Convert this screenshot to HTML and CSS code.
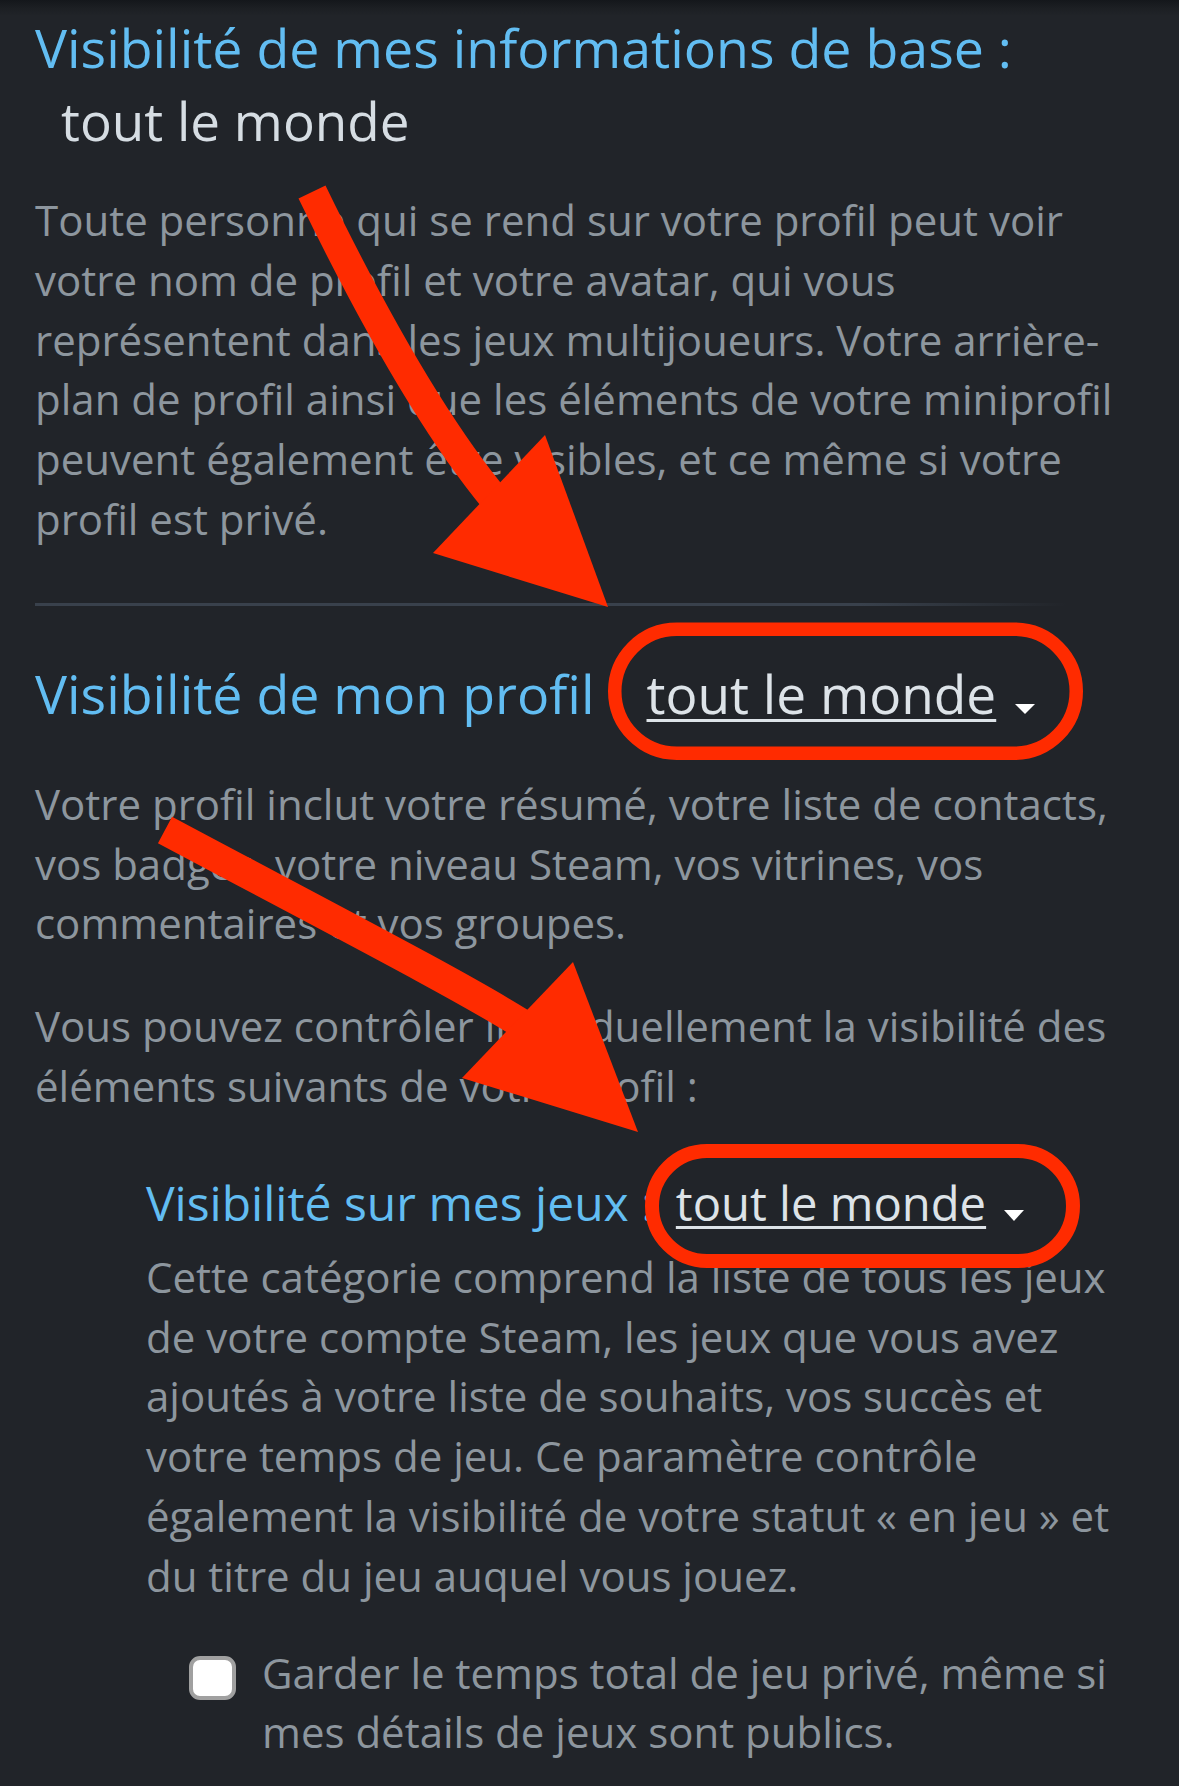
FILE: index.html
```html
<!DOCTYPE html>
<html lang="fr">
<head>
<meta charset="utf-8">
<title>Paramètres de confidentialité</title>
<link rel="stylesheet" href="styles.css">
</head>
<body>
<div class="page">
  <section class="block">
    <h2 class="heading">Visibilité de mes informations de base :</h2>
    <div class="value">tout le monde</div>
    <p class="desc first">Toute personne qui se rend sur votre profil peut voir<br>votre nom de profil et votre avatar, qui vous<br>représentent dans les jeux multijoueurs. Votre arrière-<br>plan de profil ainsi que les éléments de votre miniprofil<br>peuvent également être visibles, et ce même si votre<br>profil est privé.</p>
  </section>

  <hr class="divider">

  <section class="block">
    <div class="setting-row main-row">
      <h2 class="heading">Visibilité de mon profil</h2>
      <a class="dropdown" href="#">tout le monde</a><span class="caret"></span>
    </div>
    <p class="desc after-row">Votre profil inclut votre résumé, votre liste de contacts,<br>vos badges, votre niveau Steam, vos vitrines, vos<br>commentaires et vos groupes.</p>
    <p class="desc spaced">Vous pouvez contrôler individuellement la visibilité des<br>éléments suivants de votre profil :</p>

    <div class="sub">
      <div class="setting-row sub-row">
        <h3 class="subheading">Visibilité sur mes jeux :</h3>
        <a class="dropdown small" href="#">tout le monde</a><span class="caret small"></span>
      </div>
      <p class="desc sub-desc">Cette catégorie comprend la liste de tous les jeux<br>de votre compte Steam, les jeux que vous avez<br>ajoutés à votre liste de souhaits, vos succès et<br>votre temps de jeu. Ce paramètre contrôle<br>également la visibilité de votre statut « en jeu » et<br>du titre du jeu auquel vous jouez.</p>
      <label class="check-row">
        <span class="checkbox"></span>
        <span class="check-label">Garder le temps total de jeu privé, même si<br>mes détails de jeux sont publics.</span>
      </label>
    </div>
  </section>

  <svg class="annotations" viewBox="0 0 1179 1786" aria-hidden="true">
    <path d="M312 192 C 345 260 420 410 497 502" fill="none" stroke="#ff2b00" stroke-width="30"/>
    <polygon points="433,553 545,435 608,607" fill="#ff2b00"/>
    <rect x="614.75" y="629.25" width="461.5" height="124" rx="62" ry="62" fill="none" stroke="#ff2b00" stroke-width="13.5"/>
    <path d="M165 830 C 330 918 460 985 522 1024" fill="none" stroke="#ff2b00" stroke-width="30"/>
    <polygon points="462,1078 573,962 638,1132" fill="#ff2b00"/>
    <rect x="652" y="1151" width="421" height="110" rx="55" ry="55" fill="none" stroke="#ff2b00" stroke-width="14"/>
  </svg>
</div>
</body>
</html>
```

FILE: styles.css
```css
html, body {
  margin: 0;
  padding: 0;
}

body {
  background: #212429 linear-gradient(#14171b 0, #1c1f23 8px, #212429 16px) no-repeat;
  font-family: "Open Sans", "Noto Sans", "DejaVu Sans", sans-serif;
  min-height: 1786px;
}

.page {
  position: relative;
  padding: 12px 10px 0 35px;
  min-height: 1774px;
}

.block {
  margin: 0;
}

.heading {
  margin: 0;
  font-size: 53.7px;
  line-height: 72px;
  font-weight: 400;
  color: #62bdf2;
  white-space: nowrap;
}

.value {
  margin-top: 1px;
  padding-left: 26px;
  font-size: 53px;
  line-height: 72px;
  color: #d6dde3;
}

.desc {
  margin: 0;
  font-size: 42px;
  line-height: 59.8px;
  color: #8d969e;
  white-space: nowrap;
}

.desc.first {
  margin-top: 33px;
}

.divider {
  margin: 54px 0 0 0;
  width: 1032px;
  height: 3px;
  border: 0;
  background: linear-gradient(to right, #39414c 0, #39414c 80%, rgba(57, 65, 76, 0) 100%);
}

.setting-row {
  display: flex;
  align-items: baseline;
}

.main-row {
  margin-top: 52px;
  gap: 52px;
}

.dropdown {
  color: #dde3e8;
  font-size: 53.2px;
  line-height: 72px;
  text-decoration: underline;
  text-decoration-thickness: 3px;
  text-underline-offset: 5px;
  white-space: nowrap;
}

.caret {
  display: inline-block;
  width: 0;
  height: 0;
  margin-left: -33px;
  margin-bottom: 8px;
  border-left: 10px solid transparent;
  border-right: 10px solid transparent;
  border-top: 10px solid #ffffff;
}

.desc.after-row {
  margin-top: 44px;
}

.desc.spaced {
  margin-top: 43px;
}

.sub {
  padding-left: 111px;
}

.sub-row {
  margin-top: 55px;
  gap: 22px;
}

.subheading {
  margin: 0;
  font-size: 48px;
  line-height: 64px;
  font-weight: 400;
  color: #62bdf2;
  white-space: nowrap;
}

.dropdown.small {
  font-size: 47.2px;
  line-height: 64px;
}

.caret.small {
  margin-left: -4px;
  margin-bottom: 5px;
  border-left-width: 10.5px;
  border-right-width: 10.5px;
  border-top-width: 11px;
}

.desc.sub-desc {
  margin-top: 12px;
}

.check-row {
  display: flex;
  align-items: flex-start;
  margin-top: 37px;
  padding-left: 43px;
  gap: 26px;
}

.checkbox {
  flex: none;
  box-sizing: border-box;
  width: 47px;
  height: 44px;
  margin-top: 13px;
  border: 4px solid #a0a0a0;
  border-radius: 11px;
  background: #ffffff;
}

.check-label {
  font-size: 42px;
  line-height: 59.8px;
  color: #8d969e;
  white-space: nowrap;
}

.annotations {
  position: absolute;
  top: 0;
  left: 0;
  width: 1179px;
  height: 1786px;
  pointer-events: none;
}
```
